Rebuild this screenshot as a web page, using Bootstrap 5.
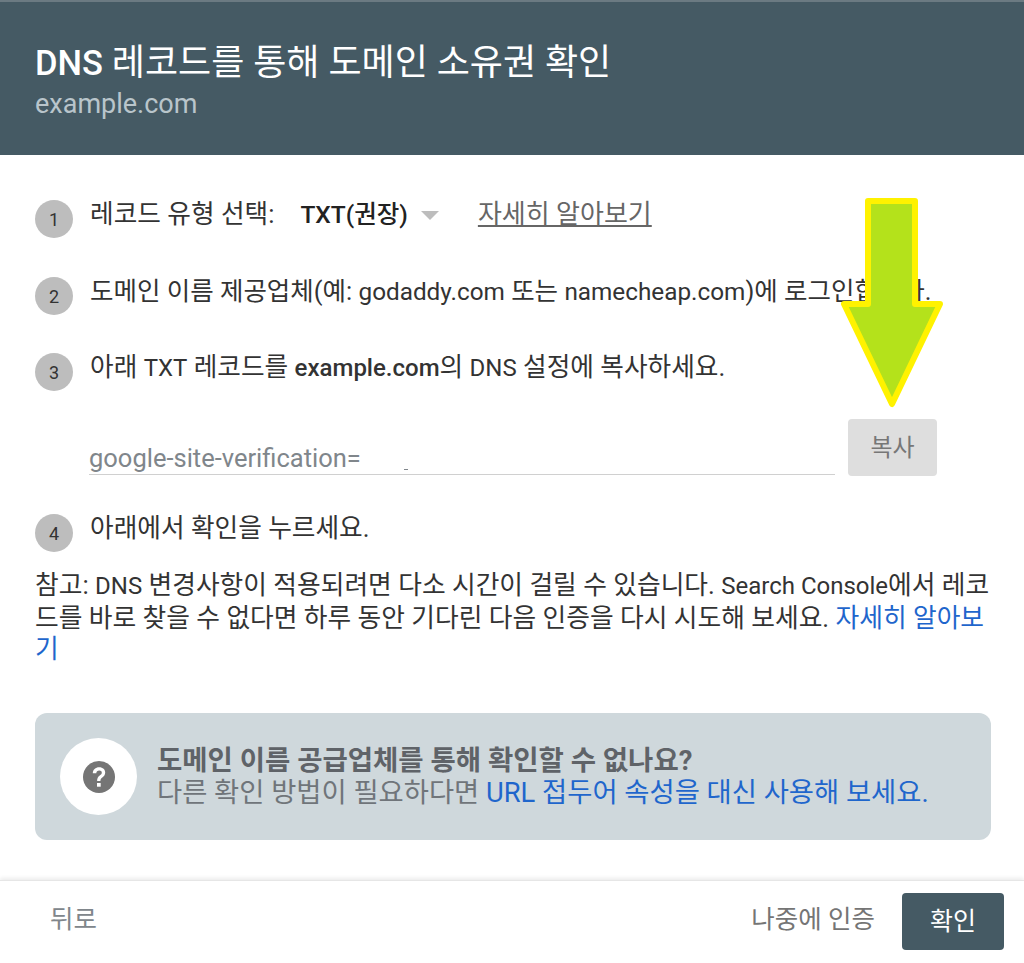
<!DOCTYPE html>
<html lang="ko">
<head>
<meta charset="utf-8">
<title>DNS 레코드를 통해 도메인 소유권 확인</title>
<link href="https://cdn.jsdelivr.net/npm/bootstrap@5.3.0/dist/css/bootstrap.min.css" rel="stylesheet">
<style>
html,body{height:963px;overflow:hidden;background:#fff}
body{font-family:Roboto,"Noto Sans CJK KR",sans-serif;color:#333;font-size:25.7px;line-height:31.5px}
.shell{height:963px;position:relative}
.head{height:155px;background:#455a64;border-top:2px solid #6b7a82;padding:38px 35px 0}
.head-title{font-size:36px;line-height:46px;color:#fff;font-weight:400;margin:0}
.head-title b{font-weight:500;font-size:34.5px}
.head-sub{font-size:27px;line-height:36px;color:#b9c5cb}
.main{padding:45px 33px 0 35px}
.step{height:38px;margin-bottom:38.5px;gap:17px}
.num{width:38px;height:38px;border-radius:50%;background:#bdbdbd;color:#333;font-size:18px;flex:none;padding-top:2px}
.step-text{margin-top:-1px;white-space:nowrap}
.step-compact{font-size:25.5px}
.lat{font-size:24.3px}
.lat-narrow{font-size:24px}
.kind{font-weight:500;color:#222;margin-left:26px;font-size:24.5px}
.caret{width:0;height:0;border-left:9.500px solid transparent;border-right:9.500px solid transparent;border-top:9px solid #bdbdbd;margin:0 39px 0 13px;display:inline-block;vertical-align:3px}
.more{color:#666;text-decoration:underline;font-size:26px}
.token-row{padding-left:54px;margin-top:-10px;height:57px;margin-bottom:37px}
.token{width:746px;height:55px;border-bottom:1px solid #d0d0d0;color:#80868b;font-size:25.500px;padding-top:23px}
.speck{display:inline-block;width:4px;height:1px;background:#80868b;margin-left:43px;vertical-align:-3px}
.copy{width:89px;height:57px;margin:-1px 0 0 13px;background:#dedede;border:0;border-radius:4px;color:#777;font-size:24px;padding:3px 0 0}
.note{margin-top:-20px;width:972px;color:#333;font-size:25.75px}
.note .lat{font-size:24px}
.blue{color:#1f66cc;text-decoration:none}
.hint{height:127px;margin-top:47.500px;background:#cfd8dc;border-radius:12px;padding-left:25px;width:956px;gap:20px;font-size:27.500px}
.disc{width:77px;height:77px;background:#fff;border-radius:50%;flex:none}
.hint-a{font-weight:700;color:#5f6368;line-height:32px}
.hint-b{color:#70757a;line-height:32px;font-size:27.350px}
.foot{position:absolute;left:0;right:0;top:880px;height:83px;border-top:1px solid #e6e6e6;box-shadow:0 -2px 4px rgba(0,0,0,.08);background:#fff;padding:12px 20px 0 50px}
.back{color:#80868b;font-size:25.500px;margin-top:11px}
.later{color:#757575;font-size:25.500px;margin:11px 27px 0 0}
.confirm{width:102px;height:57px;background:#455a64;color:#fff;border:0;border-radius:4px;font-size:25px;padding:0}
.pointer{position:absolute;left:0;top:0;pointer-events:none}
</style>
</head>
<body>
<div class="shell">
  <header class="head">
    <h1 class="head-title"><b>DNS</b> 레코드를 통해 도메인 소유권 확인</h1>
    <div class="head-sub">example.com</div>
  </header>
  <main class="main">
    <div class="step d-flex"><span class="num d-flex align-items-center justify-content-center">1</span><div class="step-text">레코드 유형 선택:<span class="kind">TXT(권장)</span><span class="caret"></span><span class="more">자세히 알아보기</span></div></div>
    <div class="step d-flex"><span class="num d-flex align-items-center justify-content-center">2</span><div class="step-text step-compact">도메인 이름 제공업체(예: <span class="lat">godaddy.com</span> 또는 <span class="lat">namecheap.com</span>)에 로그인합니다.</div></div>
    <div class="step d-flex"><span class="num d-flex align-items-center justify-content-center">3</span><div class="step-text">아래 <span class="lat-narrow">TXT</span> 레코드를 <b class="fw-medium lat-narrow">example.com</b>의 <span class="lat-narrow">DNS</span> 설정에 복사하세요.</div></div>
    <div class="token-row d-flex align-items-start">
      <div class="token">google-site-verification=<span class="speck"></span></div>
      <button class="copy" type="button">복사</button>
    </div>
    <div class="step d-flex"><span class="num d-flex align-items-center justify-content-center">4</span><div class="step-text">아래에서 확인을 누르세요.</div></div>
    <p class="note mb-0">참고: <span class="lat">DNS</span> 변경사항이 적용되려면 다소 시간이 걸릴 수 있습니다. <span class="lat">Search Console</span>에서 레코드를 바로 찾을 수 없다면 하루 동안 기다린 다음 인증을 다시 시도해 보세요. <a class="blue" href="#">자세히 알아보기</a></p>
    <div class="hint d-flex align-items-center">
      <span class="disc d-flex align-items-center justify-content-center">
        <svg width="32" height="32" viewBox="0 0 32 32"><circle cx="16" cy="16" r="16" fill="#757575"/><path d="M9.800 12.300c0-3.700 2.700-6.100 6.400-6.100s6 2.300 6 5.400c0 2.400-1.200 3.600-2.900 5-1.400 1.100-1.900 1.900-1.900 3.500h-3.300c0-2.700.8-4 2.600-5.500 1.400-1.100 2.100-1.900 2.100-2.900 0-1.300-1-2.100-2.600-2.100-1.700 0-2.800 1.100-2.900 2.700z" fill="#fff"/><rect x="14" y="22" width="3.700" height="3.700" fill="#fff"/></svg>
      </span>
      <div>
        <div class="hint-a">도메인 이름 공급업체를 통해 확인할 수 없나요?</div>
        <div class="hint-b">다른 확인 방법이 필요하다면 <a class="blue" href="#">URL 접두어 속성을 대신 사용해 보세요.</a></div>
      </div>
    </div>
  </main>
  <footer class="foot d-flex justify-content-between align-items-start">
    <span class="back">뒤로</span>
    <div class="d-flex align-items-start">
      <span class="later">나중에 인증</span>
      <button class="confirm" type="button">확인</button>
    </div>
  </footer>
  <svg class="pointer" width="1024" height="963" viewBox="0 0 1024 963"><path d="M868 201H915V304H940L892 404L844 304H868Z" fill="#b4e21b" stroke="#fff200" stroke-width="6" stroke-linejoin="round"/></svg>
</div>
<script src="https://cdn.jsdelivr.net/npm/bootstrap@5.3.0/dist/js/bootstrap.bundle.min.js"></script>
</body>
</html>
